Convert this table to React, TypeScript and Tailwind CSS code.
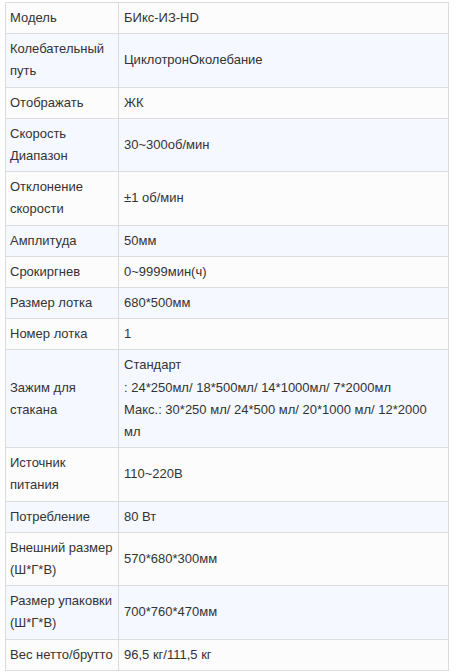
const rows: [string[], string[]][] = [
  [["Модель"], ["БИкс-ИЗ-HD"]],
  [["Колебательный", "путь"], ["ЦиклотронОколебание"]],
  [["Отображать"], ["ЖК"]],
  [["Скорость", "Диапазон"], ["30~300об/мин"]],
  [["Отклонение", "скорости"], ["±1 об/мин"]],
  [["Амплитуда"], ["50мм"]],
  [["Срокиргнев"], ["0~9999мин(ч)"]],
  [["Размер лотка"], ["680*500мм"]],
  [["Номер лотка"], ["1"]],
  [
    ["Зажим для", "стакана"],
    [
      "Стандарт",
      ": 24*250мл/ 18*500мл/ 14*1000мл/ 7*2000мл",
      "Макс.: 30*250 мл/ 24*500 мл/ 20*1000 мл/ 12*2000",
      "мл",
    ],
  ],
  [["Источник", "питания"], ["110~220В"]],
  [["Потребление"], ["80 Вт"]],
  [["Внешний размер", "(Ш*Г*В)"], ["570*680*300мм"]],
  [["Размер упаковки", "(Ш*Г*В)"], ["700*760*470мм"]],
  [["Вес нетто/брутто"], ["96,5 кг/111,5 кг"]],
];

export default function App() {
  return (
    <div className="min-h-screen bg-white pt-[2px] pl-[5px] font-['Liberation_Sans',Arial,sans-serif] text-[13px] leading-[22.2px] text-[#333]">
      <table className="w-[444px] table-fixed border-collapse">
        <tbody>
          {rows.map(([label, value], i) => (
            <tr key={i} className={i % 2 === 0 ? "bg-[#fcfcfc]" : "bg-[#f5f9ff]"}>
              <td className="w-[113px] border border-[#dcdcdc] py-1 pl-[4px] pr-0 align-middle">
                {label.map((l, j) => (
                  <div key={j} className="whitespace-nowrap">
                    {l}
                  </div>
                ))}
              </td>
              <td className="border border-[#dcdcdc] py-1 pl-[5px] pr-2 align-middle">
                {value.map((v, j) => (
                  <div key={j} className="whitespace-nowrap">
                    {v}
                  </div>
                ))}
              </td>
            </tr>
          ))}
        </tbody>
      </table>
    </div>
  );
}
